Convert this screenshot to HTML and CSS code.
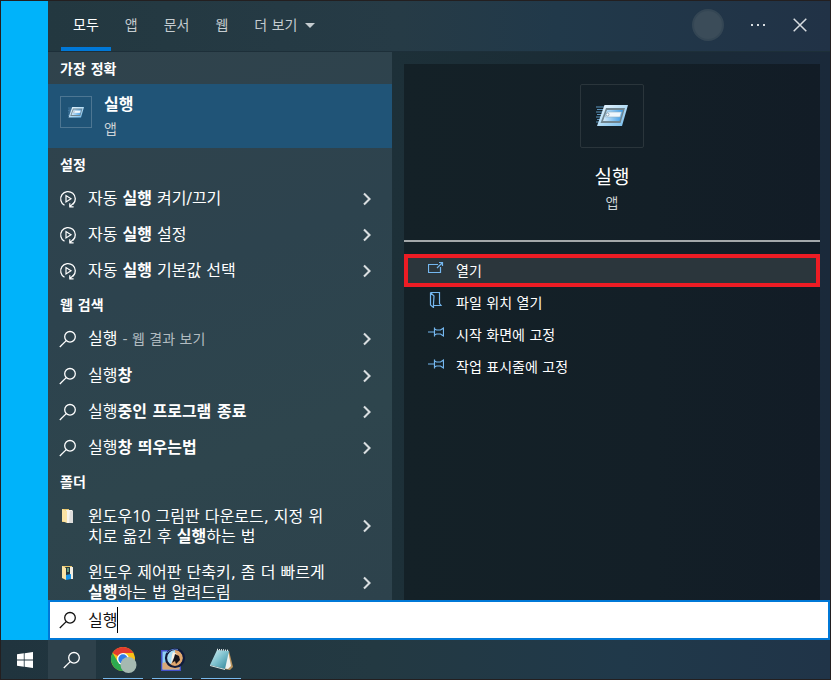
FILE: index.html
```html
<!DOCTYPE html>
<html lang="ko">
<head>
<meta charset="utf-8">
<meta name="viewport" content="width=device-width, initial-scale=1">
<title>실행</title>
<link rel="stylesheet" href="styles.css">
</head>
<body>
<svg class="defs" aria-hidden="true">
  <defs>
    <linearGradient id="runFrame" x1="0" y1="0" x2="1" y2="1">
      <stop offset="0" stop-color="#f2faff"/><stop offset=".5" stop-color="#b4dcf5"/><stop offset="1" stop-color="#6fb8ea"/>
    </linearGradient>
    <linearGradient id="runFill" x1="0" y1="0" x2="1" y2="0">
      <stop offset="0" stop-color="#d5ecfb"/><stop offset="1" stop-color="#3a9be6"/>
    </linearGradient>
    <linearGradient id="noteFill" x1="0" y1="0" x2="1" y2="1">
      <stop offset="0" stop-color="#d8f1f4"/><stop offset=".5" stop-color="#7cc0cd"/><stop offset="1" stop-color="#2d8296"/>
    </linearGradient>
    <symbol id="run" viewBox="0 0 32 22">
      <path d="M0 2h9M1 4.500h7M0 7h7M1 9.500h5M0 12h5M1 14.500h4M0 17h3" stroke="#5d95be" stroke-width="1.100"/>
      <path d="M8.500 0H32l-6 21H1z" fill="url(#runFrame)"/>
      <path d="M10 3h19l-4.500 15H4.500z" fill="#71858f"/>
      <path d="M11 5h16l-3.500 11H7z" fill="url(#runFill)"/>
      <path d="M11 7h14.500l-1.500 5H9.500z" fill="#eef7fd" stroke="#8eaec5" stroke-width=".6"/>
      <circle cx="11.500" cy="9.500" r="1.500" fill="#fff" stroke="#6c8ca3" stroke-width=".7"/>
    </symbol>
    <symbol id="autoplay" viewBox="0 0 18 18">
      <path d="M5.500 15.300A7.300 7.300 0 1 1 14 14.200" fill="none" stroke="currentColor" stroke-width="1.300"/>
      <path d="M10.800 13.200v3.600h3.800M10.800 16.600l4-3.600" fill="none" stroke="currentColor" stroke-width="1.200"/>
      <path d="M7 5.500v6.500l5-3.250z" fill="none" stroke="currentColor" stroke-width="1.200"/>
    </symbol>
    <symbol id="search" viewBox="0 0 18 18">
      <circle cx="11" cy="6.800" r="5.300" fill="none" stroke="currentColor" stroke-width="1.300"/>
      <path d="M7.200 10.600.8 17" fill="none" stroke="currentColor" stroke-width="1.300"/>
    </symbol>
    <symbol id="chevron" viewBox="0 0 10 14">
      <path d="M2 1.500 7.500 7 2 12.500" fill="none" stroke="currentColor" stroke-width="2.100"/>
    </symbol>
    <symbol id="pin" viewBox="0 0 16 16">
      <path d="M0 8h6M6.500 3.500v9M6.500 5l2 1h4l3-2v8l-3-2h-4l-2 1" fill="none" stroke="currentColor" stroke-width="1.200"/>
    </symbol>
  </defs>
</svg>

<div class="screen">
  <div class="desktop">
    <main class="panel">
      <header class="top">
        <nav class="tabs" aria-label="검색 범위">
          <button class="tab tab-on">모두</button>
          <button class="tab">앱</button>
          <button class="tab">문서</button>
          <button class="tab">웹</button>
          <button class="tab">더 보기<span class="drop"></span></button>
        </nav>
        <div class="tools">
          <button class="avatar" aria-label="계정"></button>
          <button class="tool" aria-label="옵션"><svg width="16" height="4" viewBox="0 0 16 4"><path d="M1 1h2v2H1zM7 1h2v2H7zM13 1h2v2h-2z" fill="currentColor"/></svg></button>
          <button class="tool" aria-label="닫기"><svg width="14" height="14" viewBox="0 0 14 14"><path d="M.7.7l12.600 12.600M13.300.7.7 13.300" stroke="currentColor" stroke-width="1.500"/></svg></button>
        </div>
      </header>

      <div class="content">
        <section class="results">
          <h2 class="group">가장 정확</h2>
          <a class="best" href="#run">
            <span class="best-icon"><svg width="16" height="11"><use href="#run"/></svg></span>
            <span class="best-text"><b class="best-name">실행</b><span class="kind">앱</span></span>
          </a>

          <h2 class="group">설정</h2>
          <a class="row" href="#s1"><svg class="icon"><use href="#autoplay"/></svg><span class="label">자동 <b>실행</b> 켜기/끄기</span><svg class="chev"><use href="#chevron"/></svg></a>
          <a class="row" href="#s2"><svg class="icon"><use href="#autoplay"/></svg><span class="label">자동 <b>실행</b> 설정</span><svg class="chev"><use href="#chevron"/></svg></a>
          <a class="row" href="#s3"><svg class="icon"><use href="#autoplay"/></svg><span class="label">자동 <b>실행</b> 기본값 선택</span><svg class="chev"><use href="#chevron"/></svg></a>

          <h2 class="group">웹 검색</h2>
          <a class="row row-lead" href="#w1"><svg class="icon"><use href="#search"/></svg><span class="label">실행 <small class="hint">- 웹 결과 보기</small></span><svg class="chev"><use href="#chevron"/></svg></a>
          <a class="row" href="#w2"><svg class="icon"><use href="#search"/></svg><span class="label">실행<b>창</b></span><svg class="chev"><use href="#chevron"/></svg></a>
          <a class="row" href="#w3"><svg class="icon"><use href="#search"/></svg><span class="label">실행<b>중인 프로그램 종료</b></span><svg class="chev"><use href="#chevron"/></svg></a>
          <a class="row" href="#w4"><svg class="icon"><use href="#search"/></svg><span class="label">실행<b>창 띄우는법</b></span><svg class="chev"><use href="#chevron"/></svg></a>

          <h2 class="group">폴더</h2>
          <a class="row row-tall" href="#f1">
            <svg class="icon" viewBox="0 0 18 18"><path d="M3 2h7v13H3z" fill="#e8c76c"/><path d="M7 3h6l1 1v12H8z" fill="#f6f4ee"/><path d="M11 4l3 0v12l-4 0z" fill="#dedddb"/><path d="M3 2l5 2v12l-5-2z" fill="#fbe3a4"/></svg>
            <span class="label">윈도우<span class="num">10</span> 그림판 다운로드, 지정 위치로 옮긴 후 <b>실행</b>하는 법</span><svg class="chev"><use href="#chevron"/></svg>
          </a>
          <a class="row row-tall" href="#f2">
            <svg class="icon" viewBox="0 0 18 18"><path d="M3 2h10v12H3z" fill="#e8c76c"/><path d="M6 3h6v9H6z" fill="#28383c"/><path d="M11 3h3v12h-3z" fill="#f2eee2"/><path d="M8 4h2v4H8z" fill="#5f9a7d"/><path d="M7 11l5-1v5l-5 1z" fill="#1595e8"/><path d="M3 2l4 2v12l-4-2z" fill="#fbe3a4"/></svg>
            <span class="label">윈도우 제어판 단축키, 좀 더 빠르게 <b>실행</b>하는 법 알려드림</span><svg class="chev"><use href="#chevron"/></svg>
          </a>
        </section>

        <section class="detail">
          <div class="card">
            <div class="hero">
              <span class="hero-icon"><svg width="32" height="22"><use href="#run"/></svg></span>
              <h1 class="hero-name">실행</h1>
              <span class="kind">앱</span>
            </div>
            <div class="actions">
              <button class="action action-on"><svg class="act-icon" viewBox="0 0 16 16"><path d="M10 4.500H.5v8h12V7M9 8l5.500-5.500M11 2.500h3.500V6" fill="none" stroke="currentColor" stroke-width="1.200"/></svg>열기</button>
              <button class="action"><svg class="act-icon" viewBox="0 0 16 16"><path d="M2.500.5h9v11l1.500 2H6M2.500.5v12.500l3 2.500v-4L6 4 2.500.5" fill="none" stroke="currentColor" stroke-width="1.200"/></svg>파일 위치 열기</button>
              <button class="action"><svg class="act-icon"><use href="#pin"/></svg>시작 화면에 고정</button>
              <button class="action"><svg class="act-icon"><use href="#pin"/></svg>작업 표시줄에 고정</button>
            </div>
          </div>
        </section>
      </div>

      <label class="search">
        <svg class="icon"><use href="#search"/></svg>
        <input class="query" type="text" value="실행" aria-label="검색"><span class="caret"></span>
      </label>
    </main>
  </div>

  <footer class="taskbar">
    <button class="task" aria-label="시작"><svg width="16" height="16" viewBox="0 0 16 16"><path d="M0 2.300 6.800 1.300v6.300H0zM7.600 1.200 16 0v7.600H7.600zM0 8.400h6.800v6.300L0 13.700zM7.600 8.400H16V16l-8.400-1.200z" fill="#fff"/></svg></button>
    <button class="task task-search" aria-label="검색"><svg class="icon"><use href="#search"/></svg></button>
    <div class="apps">
      <button class="app" aria-label="Chrome"><svg width="28" height="28" viewBox="0 0 28 28">
        <circle cx="14" cy="14" r="12" fill="#fbc116"/>
        <path d="M14 14 3.600 8A12 12 0 0 1 24.400 8H14z" fill="#e33b2e"/>
        <path d="M3.600 8A12 12 0 0 0 14 26l5.200-9L14 14 9 17z" fill="#2da94f"/>
        <circle cx="14" cy="14" r="6" fill="#fff"/><circle cx="14" cy="14" r="4.700" fill="#2f7de9"/>
        <circle cx="19.500" cy="20" r="8" fill="#a5b9b1"/></svg></button>
      <button class="app" aria-label="이미지 뷰어"><svg width="28" height="28" viewBox="0 0 28 28">
        <path d="M3 5h20v21H3z" fill="#4450c8"/><path d="M4.500 6.500h17v18h-17z" fill="#8fd0f5"/><path d="M4.500 18l8-2 9 3v5.500h-17z" fill="#d8a878"/>
        <circle cx="17" cy="13" r="8" fill="#e0a76d"/><path d="M9 13a8 8 0 0 1 8-8v6l-4 8q-4-1-4-6z" fill="#a9dcf4"/><path d="M15 7l4 2-3 3-3 6 1-8z" fill="#fbf2e4"/><path d="M17 9l4 2 1 4-4 4-1-3-3 2 2-5z" fill="#15131a"/>
        <circle cx="17" cy="13" r="9" fill="none" stroke="#101b3c" stroke-width="2.200"/><path d="M9 8Q13 3 20 4.500" fill="none" stroke="#5574bd"/></svg></button>
      <button class="app" aria-label="메모장"><svg width="28" height="28" viewBox="0 0 28 28">
        <path d="M22 6l4 16-3 3-6-1z" fill="#b8925c"/><path d="M21 5l3 16-3 3-6-1z" fill="#eef1ee"/>
        <path d="M10 5l12 1-4 18L3 20z" fill="url(#noteFill)"/><path d="M3 20l15 4v1L3 21z" fill="#d7e6e5"/><path d="M10 4.500l12 1" stroke="#e8eff0" stroke-width="1.500" stroke-dasharray="1 1"/></svg></button>
    </div>
  </footer>
</div>
</body>
</html>
```
FILE: styles.css
```css
* { box-sizing: border-box; }

body {
  margin: 0;
  color: #fff;
  font-family: "DejaVu Sans", "Noto Sans CJK KR", sans-serif;
  font-size: 16px;
  line-height: 20px;
}

button {
  padding: 0;
  border: 0;
  background: none;
  color: inherit;
  font: inherit;
}

a { color: inherit; text-decoration: none; }
h1, h2 { margin: 0; }
svg { display: block; flex: none; }
.defs { position: absolute; width: 0; height: 0; }

.screen {
  display: flex;
  flex-direction: column;
  height: 100vh;
  border: 1px solid #231f20;
}

.desktop {
  display: flex;
  flex: 1;
  min-height: 0;
  padding-left: 47px;
  background: #00b3fa;
}

.panel {
  display: flex;
  flex: 1;
  flex-direction: column;
  min-width: 0;
}

/* Header */
.top {
  display: flex;
  flex: none;
  justify-content: space-between;
  height: 51px;
  padding: 0 13px;
  border-bottom: 1px solid #1d2f39;
  background: linear-gradient(90deg, #233840, #263b46 45%, #21394a 65%, #213246);
}

.tabs { display: flex; gap: 2px; }

.tab {
  display: flex;
  align-items: center;
  gap: 8px;
  padding: 2px 12px 0;
  border-bottom: 4px solid transparent;
  color: #c5ccd0;
  font-size: 14px;
}

.tab-on { border-color: #0078d7; color: #fff; }

.drop {
  border: 5px solid transparent;
  border-top-color: currentColor;
  border-bottom: 0;
}

.tools { display: flex; align-items: center; gap: 8px; padding-bottom: 2px; color: #d8dde1; }

.avatar {
  width: 32px;
  height: 32px;
  margin-right: 9px;
  border: 2px solid #344654;
  border-radius: 50%;
  background: #3b4c59;
}

.tool {
  display: grid;
  place-items: center;
  width: 34px;
  height: 34px;
}

/* Results */
.content { display: flex; flex: 1; min-height: 0; }

.results {
  flex: none;
  width: 44%;
  overflow: hidden;
  background: linear-gradient(160deg, #30434c, #2d434e 40%, #2e454d 70%, #2d424c);
}

.group {
  padding: 7px 12px 5px;
  font-size: 14px;
  font-weight: 700;
}

.best {
  display: flex;
  gap: 12px;
  padding: 11px 12px 9px;
  background: #205477;
}

.best-icon {
  display: grid;
  place-items: center;
  width: 32px;
  height: 32px;
  margin-top: 1px;
  border: 1px solid #4d7692;
}

.best-text { display: flex; flex-direction: column; gap: 4px; }
.kind { color: #ccd3d7; font-size: 14px; }

.row {
  display: flex;
  align-items: center;
  gap: 11px;
  padding: 8px 20px 7px 11px;
}

.row-lead { padding-bottom: 8px; }
.icon { width: 18px; height: 18px; }
.row-tall .icon { align-self: flex-start; margin-top: 2px; }
.label { flex: 1; padding: 1px 24px 0 0; }
.num { font-family: "Open Sans", sans-serif; }
.hint { color: #b2bcc1; font-size: 14px; }
.chev { width: 10px; height: 14px; color: #d9dee0; }

/* Detail card */
.detail {
  display: flex;
  flex: 1;
  padding: 12px 10px 0 12px;
  background: linear-gradient(90deg, #1d3038, #1a2b35 50%, #1a293a);
}

.card {
  flex: 1;
  background: linear-gradient(90deg, #142127, #131f27 60%, #121c26);
}

.hero {
  display: flex;
  flex-direction: column;
  align-items: center;
  padding: 20px 0 27px;
  border-bottom: 2px solid #a3a8aa;
}

.hero-icon {
  display: grid;
  place-items: center;
  width: 64px;
  height: 64px;
  border: 1px solid #2a353b;
  border-radius: 2px;
}

.hero-name {
  margin: 17px 0 4px;
  font-size: 19px;
  font-weight: 400;
  line-height: 24px;
}

.actions { padding-top: 12px; }

.action {
  display: flex;
  align-items: center;
  gap: 12px;
  width: 100%;
  height: 32px;
  padding: 0 24px;
  font-size: 14px;
}

.action-on {
  height: 33px;
  padding: 0 20px;
  border: 4px solid #ed1c24;
  background: #2b363c;
}

.act-icon { width: 16px; height: 16px; margin-bottom: 6px; color: #74b7ef; }

/* Search field */
.search {
  display: flex;
  flex: none;
  align-items: center;
  height: 40px;
  padding-left: 9px;
  border: 2px solid #0078d7;
  background: #fff;
  color: #111;
}

.query {
  field-sizing: content;
  margin-left: 11px;
  padding: 1px 0 0;
  border: 0;
  outline: 0;
  background: none;
  color: #111;
  font: inherit;
}

.caret { width: 1px; height: 26px; background: #000; }

/* Taskbar */
.taskbar {
  display: flex;
  flex: none;
  height: 39px;
  background: linear-gradient(90deg, #20343e, #233942 45%, #20394a 75%, #203448);
}

.task { display: grid; place-items: center; width: 47px; }
.task-search { width: 48px; background: #2e414b; }
.apps { display: flex; gap: 9px; padding-left: 7px; }

.app {
  display: grid;
  place-items: center;
  width: 40px;
  border-bottom: 1px solid #76b9ed;
}
```
